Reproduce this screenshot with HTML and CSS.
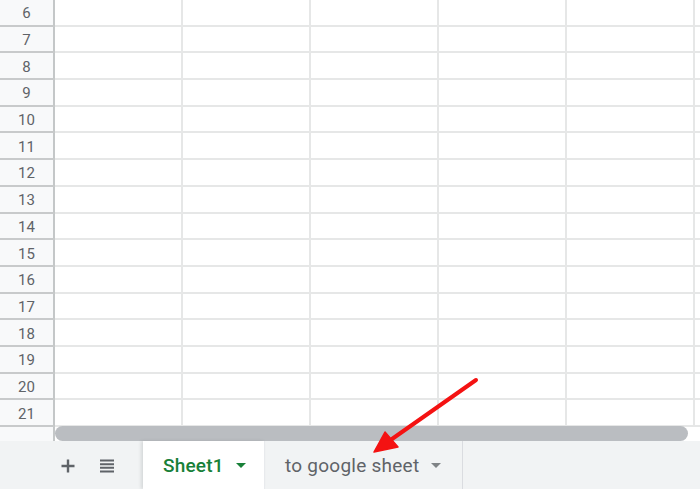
FILE: index.html
```html
<!DOCTYPE html>
<html>
<head>
<meta charset="utf-8">
<link rel="stylesheet" href="styles.css">
</head>
<body>
<div class="sheet">
  <div class="grid">
    <div class="rh">6</div><div class="c"></div><div class="c"></div><div class="c"></div><div class="c"></div><div class="c"></div><div class="c"></div>
    <div class="rh">7</div><div class="c"></div><div class="c"></div><div class="c"></div><div class="c"></div><div class="c"></div><div class="c"></div>
    <div class="rh">8</div><div class="c"></div><div class="c"></div><div class="c"></div><div class="c"></div><div class="c"></div><div class="c"></div>
    <div class="rh">9</div><div class="c"></div><div class="c"></div><div class="c"></div><div class="c"></div><div class="c"></div><div class="c"></div>
    <div class="rh">10</div><div class="c"></div><div class="c"></div><div class="c"></div><div class="c"></div><div class="c"></div><div class="c"></div>
    <div class="rh">11</div><div class="c"></div><div class="c"></div><div class="c"></div><div class="c"></div><div class="c"></div><div class="c"></div>
    <div class="rh">12</div><div class="c"></div><div class="c"></div><div class="c"></div><div class="c"></div><div class="c"></div><div class="c"></div>
    <div class="rh">13</div><div class="c"></div><div class="c"></div><div class="c"></div><div class="c"></div><div class="c"></div><div class="c"></div>
    <div class="rh">14</div><div class="c"></div><div class="c"></div><div class="c"></div><div class="c"></div><div class="c"></div><div class="c"></div>
    <div class="rh">15</div><div class="c"></div><div class="c"></div><div class="c"></div><div class="c"></div><div class="c"></div><div class="c"></div>
    <div class="rh">16</div><div class="c"></div><div class="c"></div><div class="c"></div><div class="c"></div><div class="c"></div><div class="c"></div>
    <div class="rh">17</div><div class="c"></div><div class="c"></div><div class="c"></div><div class="c"></div><div class="c"></div><div class="c"></div>
    <div class="rh">18</div><div class="c"></div><div class="c"></div><div class="c"></div><div class="c"></div><div class="c"></div><div class="c"></div>
    <div class="rh">19</div><div class="c"></div><div class="c"></div><div class="c"></div><div class="c"></div><div class="c"></div><div class="c"></div>
    <div class="rh">20</div><div class="c"></div><div class="c"></div><div class="c"></div><div class="c"></div><div class="c"></div><div class="c"></div>
    <div class="rh">21</div><div class="c"></div><div class="c"></div><div class="c"></div><div class="c"></div><div class="c"></div><div class="c"></div>
  </div>
  <div class="scrollrow">
    <div class="scrollhead"></div>
    <div class="track"><div class="thumb"></div></div>
  </div>
  <div class="tabbar">
    <div class="tools">
      <svg class="ic" width="16" height="16" viewBox="0 0 16 16"><path d="M8 1.5v13M1.5 8h13" stroke="#5f6368" stroke-width="2.4" fill="none"/></svg>
      <svg class="ic" width="16" height="14" viewBox="0 0 16 14"><path d="M1 1.5h14M1 5.2h14M1 8.8h14M1 12.5h14" stroke="#5f6368" stroke-width="2" fill="none"/></svg>
    </div>
    <div class="tab active"><span class="tname">Sheet1</span><span class="tri green"></span></div>
    <div class="tab"><span class="tname">to google sheet</span><span class="tri"></span></div>
  </div>
  <svg class="arrow" width="700" height="489" viewBox="0 0 700 489">
    <line x1="476" y1="380" x2="392" y2="439" stroke="#f41212" stroke-width="4" stroke-linecap="round"/>
    <path d="M374 452 L385 432 L398 447 Z" fill="#f41212" stroke="#f41212" stroke-width="1.5" stroke-linejoin="round"/>
  </svg>
</div>
</body>
</html>
```
FILE: styles.css
```css
* { box-sizing: border-box; }
html, body { margin: 0; padding: 0; }
body { background: #fff; font-family: Roboto, "Liberation Sans", Arial, sans-serif; }
.sheet { position: relative; width: 700px; height: 489px; overflow: hidden; }
.grid {
  display: grid;
  grid-template-columns: 55px repeat(6, 128px);
  grid-template-rows: repeat(16, 26.69px);
  height: 427px;
}
.rh {
  background: #f8f9fa;
  border-right: 2px solid #c4c7c8;
  border-bottom: 2px solid #c8cacb;
  color: #5f6368;
  font-size: 15px;
  display: flex;
  align-items: center;
  justify-content: center;
  padding-top: 2px;
}
.c {
  border-right: 2px solid #e6e7e7;
  border-bottom: 2px solid #e6e7e7;
}
.scrollrow { display: flex; height: 14px; }
.scrollhead { width: 55px; background: #f8f9fa; border-right: 2px solid #c4c7c8; }
.track { flex: 1; background: #fff; padding-right: 12px; }
.thumb { height: 15px; margin-top: -1px; background: #babdc1; border-radius: 8px; }
.tabbar {
  display: flex;
  height: 48px;
  background: #f1f3f4;
}
.tools { width: 143px; display: flex; align-items: center; gap: 23px; padding-left: 60px; padding-top: 1px; }
.ic { display: block; }
.tab {
  display: flex;
  align-items: center;
  height: 48px;
  padding: 0 0 0 20px;
  font-family: Roboto, "Liberation Sans", sans-serif;
  font-size: 19px;
  letter-spacing: 0.25px;
  color: #5f6368;
  border-right: 1px solid #dadce0;
  gap: 12px;
}
.tab.active {
  background: #fff;
  color: #188038;
  font-weight: 500;
  letter-spacing: 0.2px;
  width: 122px;
  box-shadow: -2px 0 3px rgba(60,64,67,0.15);
  border-right: 1px solid #e8eaed;
}
.tab:not(.active) { width: 198px; }
.tname { white-space: nowrap; }
.tri {
  width: 0; height: 0;
  border-left: 5px solid transparent;
  border-right: 5px solid transparent;
  border-top: 5px solid #7f8386;
}
.tri.green { border-top-color: #188038; }
.arrow { position: absolute; left: 0; top: 0; pointer-events: none; }
```
